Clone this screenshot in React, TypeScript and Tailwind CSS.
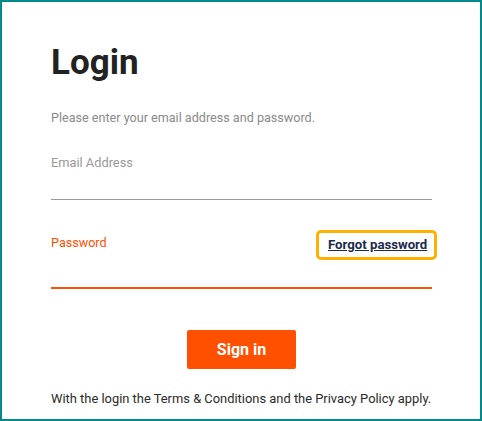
import React from "react";

export default function App() {
  return (
    <div
      className="w-[482px] h-[421px] border-2 border-[#008a8a] bg-white pl-[49px] pr-[48px] flex flex-col"
      style={{ fontFamily: "Roboto, 'Liberation Sans', sans-serif" }}
    >
      <h1 className="mt-[45px] text-[35px] leading-[32px] font-bold text-[#222222]">Login</h1>
      <p className="mt-[31px] text-[12.6px] leading-[16px] text-[#8a8a8a]">
        Please enter your email address and password.
      </p>
      <div className="mt-[29px] flex flex-col">
        <label className="text-[12.8px] leading-[16px] text-[#999999]">Email Address</label>
        <div className="h-[29px] border-b border-[#9a9a9a]"></div>
      </div>
      <div className="mt-[30px] flex flex-col">
        <div className="flex justify-between items-start">
          <label className="mt-[5px] text-[12.6px] leading-[16px] text-[#ff5000]">Password</label>
          <a
            href="#"
            className="mr-[-5px] h-[30px] w-[121px] border-[3px] border-[#ffb000] rounded-[5px] flex items-center pl-[9px] text-[13.2px] font-bold text-[#1b2a4e] underline whitespace-nowrap"
          >
            Forgot password
          </a>
        </div>
        <div className="h-[29px] border-b-2 border-[#ff5000]"></div>
      </div>
      <div className="mt-[41px] flex justify-center">
        <button className="w-[109px] h-[39px] bg-[#ff5000] rounded-[2px] text-white text-[16px] font-bold">
          Sign in
        </button>
      </div>
      <p className="mt-[22px] text-[12.9px] leading-[16px] text-[#2a2a2a] whitespace-nowrap">
        With the login the Terms &amp; Conditions and the Privacy Policy apply.
      </p>
    </div>
  );
}
